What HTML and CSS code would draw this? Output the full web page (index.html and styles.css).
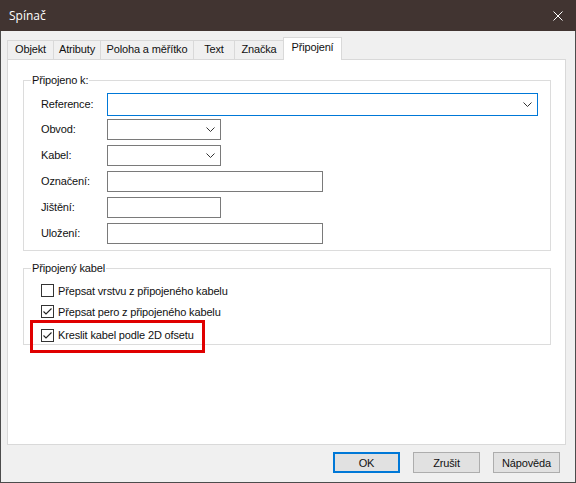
FILE: index.html
```html
<!DOCTYPE html>
<html lang="cs">
<head>
<meta charset="utf-8">
<title>Spínač</title>
<link rel="stylesheet" href="styles.css">
</head>
<body>
<div class="window">
  <div class="titlebar">
    <span class="title">Spínač</span>
    <span class="close"><svg width="10" height="10" viewBox="0 0 10 10"><path d="M0.5 0.5 L9.5 9.5 M9.5 0.5 L0.5 9.5" stroke="#fff" stroke-width="1" fill="none"/></svg></span>
  </div>
  <div class="client">
    <div class="tabs">
      <div class="tab t-objekt">Objekt</div>
      <div class="tab t-atributy">Atributy</div>
      <div class="tab t-poloha">Poloha a měřítko</div>
      <div class="tab t-text">Text</div>
      <div class="tab t-znacka">Značka</div>
      <div class="tab t-pripojeni active">Připojení</div>
    </div>
    <div class="panel">
      <fieldset class="group g1">
        <legend>Připojeno k:</legend>
        <div class="rows">
          <div class="row first">
            <span class="lbl">Reference:</span>
            <div class="combo w-ref focus"><svg class="chev" width="9" height="5" viewBox="0 0 9 5"><polyline points="0.5,0.5 4.5,4.5 8.5,0.5" fill="none" stroke="#333" stroke-width="1"/></svg></div>
          </div>
          <div class="row">
            <span class="lbl">Obvod:</span>
            <div class="combo w-s"><svg class="chev" width="9" height="5" viewBox="0 0 9 5"><polyline points="0.5,0.5 4.5,4.5 8.5,0.5" fill="none" stroke="#333" stroke-width="1"/></svg></div>
          </div>
          <div class="row">
            <span class="lbl">Kabel:</span>
            <div class="combo w-s"><svg class="chev" width="9" height="5" viewBox="0 0 9 5"><polyline points="0.5,0.5 4.5,4.5 8.5,0.5" fill="none" stroke="#333" stroke-width="1"/></svg></div>
          </div>
          <div class="row">
            <span class="lbl">Označení:</span>
            <div class="textbox w-m"></div>
          </div>
          <div class="row">
            <span class="lbl">Jištění:</span>
            <div class="textbox w-s"></div>
          </div>
          <div class="row">
            <span class="lbl">Uložení:</span>
            <div class="textbox w-m"></div>
          </div>
        </div>
      </fieldset>
      <fieldset class="group g2">
        <legend>Připojený kabel</legend>
        <div class="checks">
          <div class="check c1"><span class="cb"></span><span>Přepsat vrstvu z připojeného kabelu</span></div>
          <div class="check c2"><span class="cb"><svg width="11" height="11" viewBox="0 0 11 11"><path d="M1.5 5.5 L4 8 L9.5 2.5" fill="none" stroke="#222" stroke-width="1.1"/></svg></span><span>Přepsat pero z připojeného kabelu</span></div>
          <div class="check c3 highlight"><span class="cb"><svg width="11" height="11" viewBox="0 0 11 11"><path d="M1.5 5.5 L4 8 L9.5 2.5" fill="none" stroke="#222" stroke-width="1.1"/></svg></span><span>Kreslit kabel podle 2D ofsetu</span></div>
        </div>
      </fieldset>
    </div>
    <div class="footer">
      <button class="btn default">OK</button>
      <button class="btn">Zrušit</button>
      <button class="btn">Nápověda</button>
    </div>
  </div>
</div>
</body>
</html>
```

FILE: styles.css
```css
* { box-sizing: border-box; }

body {
  margin: 0;
  font-family: "Liberation Sans", Arial, sans-serif;
  font-size: 11px;
  letter-spacing: -0.15px;
  color: #111;
  background: #f0f0f0;
}

.window {
  width: 576px;
  height: 483px;
  display: flex;
  flex-direction: column;
}

.titlebar {
  height: 31px;
  flex: none;
  background: #413431;
  color: #fff;
  display: flex;
  align-items: center;
  justify-content: space-between;
  padding: 0 13px 0 9px;
  font-family: "Open Sans", "Noto Sans", sans-serif;
  font-size: 12px;
  letter-spacing: 0;
}

.close {
  display: flex;
  align-items: center;
}

.client {
  flex: 1;
  background: #f0f0f0;
  border: 1px solid #4c4c4c;
  border-top: 0;
  padding: 6px 9px 0 6px;
  display: flex;
  flex-direction: column;
}

.tabs {
  display: flex;
  align-items: flex-end;
  height: 22px;
  flex: none;
}

.tab {
  height: 19px;
  line-height: 17px;
  border: 1px solid #d9d9d9;
  border-bottom: 0;
  background: #f0f0f0;
  text-align: center;
  margin-left: -1px;
  white-space: nowrap;
}

.tab.t-objekt { margin-left: 0; width: 47px; }
.tab.t-atributy { width: 48px; }
.tab.t-poloha { width: 94px; }
.tab.t-text { width: 42px; }
.tab.t-znacka { width: 50px; }

.tab.active {
  width: 59px;
  height: 23px;
  padding-top: 1px;
  background: #fff;
  margin-bottom: -1px;
  position: relative;
  z-index: 1;
}

.panel {
  width: 559px;
  height: 386px;
  flex: none;
  background: #fff;
  border: 1px solid #d9d9d9;
}

.group {
  border: 1px solid #dcdcdc;
  padding: 0;
  margin: 0 0 0 15px;
  width: 528px;
  min-inline-size: 0;
}

.group legend {
  padding: 0 1px;
  margin-left: 7px;
  line-height: 13px;
  font-size: 11px;
}

.g1 { margin-top: 14px; }
.g2 { margin-top: 11px; }

.rows {
  padding: 6px 0 4px 17px;
}

.row {
  display: flex;
  align-items: flex-start;
  height: 26px;
  padding-top: 3px;
}

.row.first {
  height: 23px;
  padding-top: 0;
}

.lbl {
  width: 66px;
  flex: none;
  line-height: 21px;
}

.row.first .lbl { line-height: 23px; }

.combo, .textbox {
  height: 21px;
  border: 1px solid #7a7a7a;
  background: #fff;
  flex: none;
}

.combo {
  display: flex;
  align-items: center;
  justify-content: flex-end;
  padding-right: 5px;
}

.combo.focus {
  height: 23px;
  border-color: #0078d7;
}

.w-ref { width: 431px; }
.w-s { width: 114px; }
.w-m { width: 216px; }

.checks {
  padding: 9px 0 0 17px;
  display: flex;
  flex-direction: column;
  align-items: flex-start;
}

.check {
  display: flex;
  align-items: center;
  gap: 4px;
  height: 13px;
  white-space: nowrap;
}

.c2 { margin-top: 8px; }

.cb {
  width: 13px;
  height: 13px;
  flex: none;
  border: 1px solid #333;
  background: #fff;
  display: flex;
}

.highlight {
  height: 33px;
  margin: 2px 0 -9px -11px;
  border: 3px solid #e00000;
  padding: 6px 8px 8px 8px;
  align-items: flex-start;
}

.highlight span:last-child { line-height: 13px; }

.footer {
  display: flex;
  justify-content: flex-end;
  gap: 13px;
  margin-top: 7px;
  padding-right: 6px;
}

.btn {
  width: 67px;
  height: 21px;
  border: 1px solid #adadad;
  background: #e1e1e1;
  font-family: "Liberation Sans", Arial, sans-serif;
  font-size: 11px;
  letter-spacing: -0.15px;
  color: #111;
  padding: 0;
}

.btn.default {
  border-color: #0078d7;
  box-shadow: inset 0 0 0 1px #0078d7;
}
```
